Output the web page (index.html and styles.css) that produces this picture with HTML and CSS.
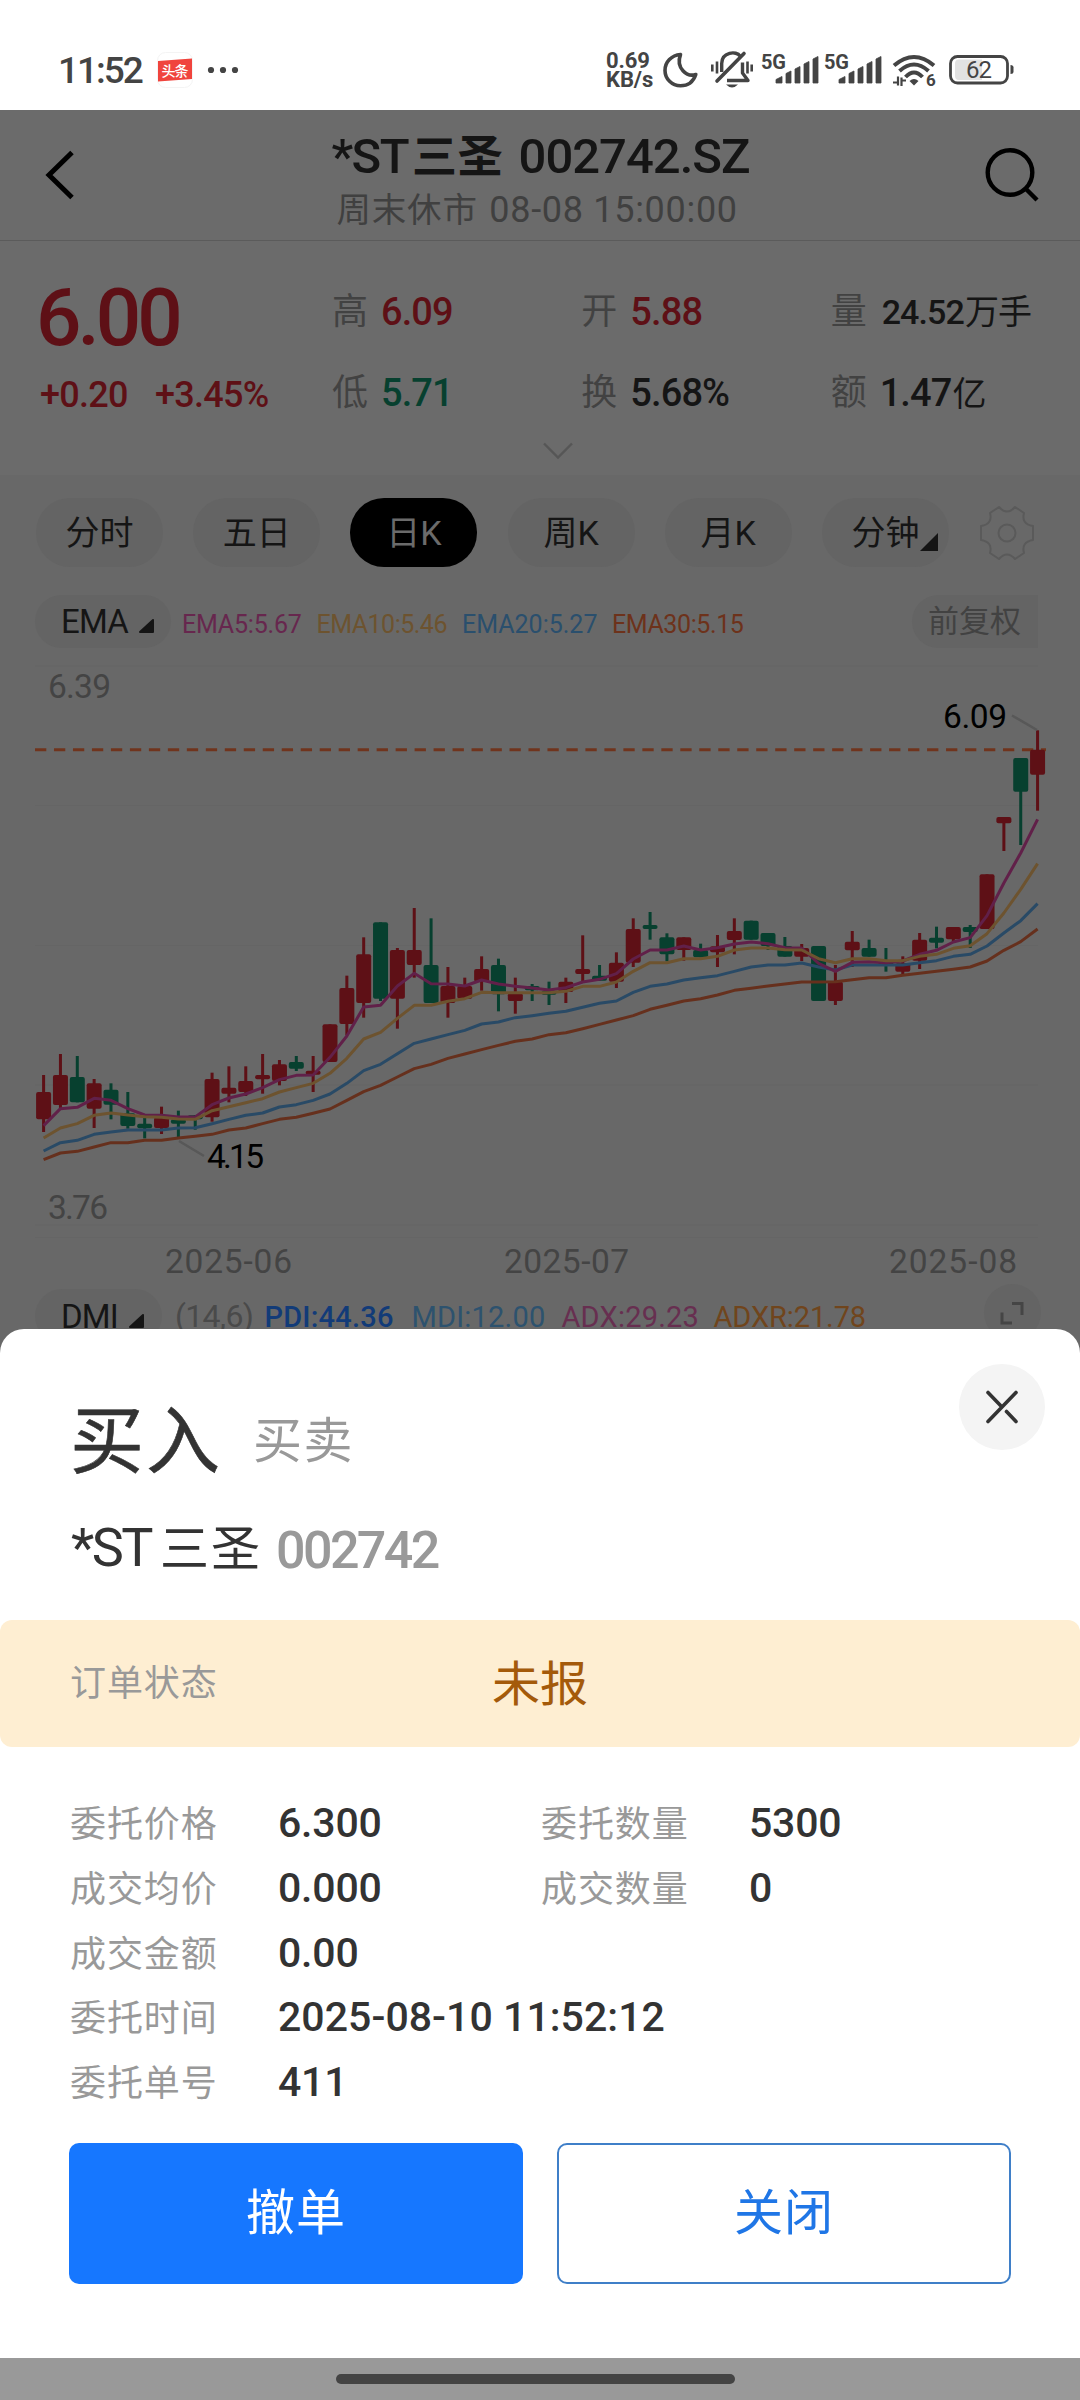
FILE: index.html
```html
<!DOCTYPE html>
<html lang="zh-CN">
<head>
<meta charset="utf-8">
<title>*ST三圣 002742.SZ</title>
<link rel="stylesheet" href="styles.css">
</head>
<body>
<div class="screen">
  <header class="statusbar">
    <span class="clock">11:52</span>
    <svg class="app-icon" width="36" height="36" viewBox="0 0 36 36"><rect x=".5" y=".5" width="35" height="35" rx="8" fill="#fff" stroke="#f4f4f4"/><path d="M1 9 35 6.500V27L1 29.500Z" fill="#f0443d"/><text x="4.500" y="23.500" font-size="14" fill="#fff" textLength="27" font-weight="500">头条</text></svg>
    <svg class="dots" width="32" height="8" viewBox="0 0 32 8" fill="#444"><circle cx="4" cy="4" r="3.100"/><circle cx="16" cy="4" r="3.100"/><circle cx="28" cy="4" r="3.100"/></svg>
    <span class="speed"><span>0.69</span><span>KB/s</span></span>
    <svg class="moon" width="36" height="36" viewBox="0 0 36 36"><path d="M17.500 2.500C8.500 3.200 2 10 2 18.500 2 27 9 33.800 17.500 33.800c7 0 12.800-4 15.300-11.300C24 25.500 12.500 16 17.500 2.500Z" fill="none" stroke="#444" stroke-width="3.600" stroke-linejoin="round"/></svg>
    <svg class="bell" width="42" height="38" viewBox="0 0 42 38" fill="none" stroke="#444" stroke-width="3.400"><path d="M10.700 21V12.500C10.700 1 25.500-.5 29 5M16 29.500H37L31.500 22V11.500" stroke-linejoin="round"/><path d="M6 30 33 2.500" stroke-width="3.600" stroke-linecap="round"/><path d="M1.300 13.500v7M6 10.500v12M36.500 10.500v12M40.700 13.500v7" stroke-width="2.600"/><path d="M15 33.500h12q-6 6-12 0Z" fill="#444" stroke="none"/></svg>
    <svg class="signal" width="58" height="36" viewBox="0 0 58 36" fill="#444"><text x="0" y="16.500" font-size="20" font-weight="700" textLength="25">5G</text><path d="M15 31v-3.500l6-3v6.500ZM25 21.500l5-2.500v12h-5ZM34 17l5-2.500v16.500h-5ZM43 12l5-2.500v21.500h-5ZM52 7l5-2.500v26.500h-5Z" stroke="#444" stroke-width=".8" stroke-linejoin="round"/></svg>
    <svg class="signal second" width="58" height="36" viewBox="0 0 58 36" fill="#444"><text x="0" y="16.500" font-size="20" font-weight="700" textLength="25">5G</text><path d="M15 31v-3.500l6-3v6.500ZM25 21.500l5-2.500v12h-5ZM34 17l5-2.500v16.500h-5ZM43 12l5-2.500v21.500h-5ZM52 7l5-2.500v26.500h-5Z" stroke="#444" stroke-width=".8" stroke-linejoin="round"/></svg>
    <svg class="wifi" width="46" height="36" viewBox="0 0 46 36"><g fill="none" stroke="#444" stroke-width="4"><path d="M2 13.500Q22 -3.500 42 13.500M7.500 19Q22 6 36.500 19M13.500 25Q22 16 30.500 25"/></g><path d="M17.500 29q4.500-4 9 0l-4.500 4.500Z" fill="#444"/><path d="M1 30.500H6V24.500V33.500M9.500 34V25.500V28.500H14" fill="none" stroke="#444" stroke-width="2.200"/><text x="34" y="34" font-size="17" font-weight="700" fill="#444">6</text></svg>
    <svg class="battery" width="67" height="32" viewBox="0 0 67 32"><rect x="1.500" y="2.500" width="57" height="26.500" rx="7" fill="none" stroke="#444" stroke-width="2.800"/><path d="M10 5.500h23V26H10q-4 0-4-4V9.500q0-4 4-4Z" fill="#e2e2e2"/><path d="M61.500 11q3 0 3 2.500v4q0 2.500-3 2.500Z" fill="#444"/><text x="17" y="24" font-size="24" fill="#444" textLength="26">62</text></svg>
  </header>

  <div class="navbar">
    <svg class="back" width="34" height="54" viewBox="0 0 34 54"><path d="M29 4.500 6 27 29 49.500" fill="none" stroke="#000" stroke-width="5"/></svg>
    <div class="heading">
      <div class="title">*ST<span class="han">三圣</span> <span class="ticker">002742.SZ</span></div>
      <div class="subtitle"><span class="han">周末休市</span> 08-08 15:00:00</div>
    </div>
    <svg class="search" width="56" height="60" viewBox="0 0 56 60"><g fill="none" stroke="#000" stroke-width="4.400"><circle cx="25" cy="26.500" r="22.300"/><path d="M40 42 52 54"/></g></svg>
  </div>

  <section class="quote">
    <div class="last">
      <div class="price">6.00</div>
      <div class="change"><span>+0.20</span><span>+3.45%</span></div>
    </div>
    <div class="stat"><p><i>高</i><b class="up">6.09</b></p><p><i>低</i><b class="down">5.71</b></p></div>
    <div class="stat"><p><i>开</i><b class="up">5.88</b></p><p><i>换</i><b>5.68%</b></p></div>
    <div class="stat"><p><i>量</i><b class="small">24.52<span>万手</span></b></p><p><i>额</i><b>1.47<span>亿</span></b></p></div>
    <svg class="expand" width="32" height="18" viewBox="0 0 32 18"><path d="M2 1.500 16 15.500 30 1.500" fill="none" stroke="#565656" stroke-width="2.400"/></svg>
  </section>

  <section class="market">
    <nav class="tabs">
      <span>分时</span><span>五日</span><span class="active">日K</span><span>周K</span><span>月K</span><span>分钟<svg class="corner" width="18" height="18" viewBox="0 0 18 18"><path d="M18 0V18H0Z" fill="#151515"/></svg></span>
      <svg class="gear" width="56" height="56" viewBox="-28 -28 56 56" fill="none" stroke="#5a5a5a" stroke-width="2"><path d="M-8-26Q0-17 8-26L17-20Q14-9 26-7V7Q14 9 17 20L8 26Q0 17-8 26L-17 20Q-14 9-26 7V-7Q-14-9-17-20Z" stroke-linejoin="round"/><circle r="8.500"/></svg>
    </nav>
    <div class="legend">
      <span class="pick">EMA<svg width="16" height="16" viewBox="0 0 16 16"><path d="M15 2V14H2Z" fill="#151515" stroke="#151515" stroke-width="2" stroke-linejoin="round"/></svg></span>
      <span class="e5">EMA5:5.67</span><span class="e10">EMA10:5.46</span><span class="e20">EMA20:5.27</span><span class="e30">EMA30:5.15</span>
      <span class="adjust">前复权</span>
    </div>
    <svg class="chart" width="1080" height="635" viewBox="0 648 1080 635">
      <g class="grid"><path d="M35 666H1038M35 805.500H1038M35 945.500H1038M35 1085H1038M35 1225H1038M35 1237.500H1038"/></g>
      <path class="lastline" d="M35 749.700H1046"/>
      <g id="candles"></g>
      <g id="averages"></g>
      <path class="leader" d="M1012 715.500 1037 730M179 1141 204 1156"/>
      <g class="mark"><text x="943" y="728" textLength="64">6.09</text><text x="207" y="1168" textLength="57">4.15</text></g>
      <g class="axis"><text x="48" y="697.500" textLength="63">6.39</text><text x="48" y="1218.500" textLength="60">3.76</text><text x="165" y="1273" textLength="127">2025-06</text><text x="504" y="1273" textLength="125">2025-07</text><text x="889" y="1273" textLength="128">2025-08</text></g>
    </svg>
    <div class="indicator">
      <span class="pick">DMI<svg width="16" height="16" viewBox="0 0 16 16"><path d="M15 2V14H2Z" fill="#151515" stroke="#151515" stroke-width="2" stroke-linejoin="round"/></svg></span>
      <span class="args">(14,6)</span><span class="pdi">PDI:44.36</span><span class="mdi">MDI:12.00</span><span class="adx">ADX:29.23</span><span class="adxr">ADXR:21.78</span>
      <span class="zoom"><svg width="28" height="28" viewBox="0 0 28 28"><path d="M14 4.500H24V16M4 13.500V24H14" fill="none" stroke="#454545" stroke-width="3"/></svg></span>
    </div>
  </section>

  <section class="sheet">
    <button class="close" aria-label="关闭"><svg width="36" height="36" viewBox="0 0 36 36"><path d="M4 3.500 17 17M22.500 22.500 32 32.500M32 3.500 4 32.500" fill="none" stroke="#333" stroke-width="3.600" stroke-linecap="round"/></svg></button>
    <div class="side"><strong>买入</strong><span>买卖</span></div>
    <div class="stock"><span class="name">*ST</span><span class="cn">三圣</span><span class="code">002742</span></div>
    <div class="state"><span class="label">订单状态</span><span class="value">未报</span></div>
    <div class="details">
      <span class="label">委托价格</span><span>6.300</span><span class="label">委托数量</span><span>5300</span>
      <span class="label">成交均价</span><span>0.000</span><span class="label">成交数量</span><span>0</span>
      <span class="label">成交金额</span><span class="wide">0.00</span>
      <span class="label">委托时间</span><span class="wide time">2025-08-10 11:52:12</span>
      <span class="label">委托单号</span><span class="wide">411</span>
    </div>
    <div class="actions"><button class="primary">撤单</button><button class="outline">关闭</button></div>
  </section>
  <footer class="home"><span></span></footer>
</div>
<script src="chart.js"></script>
</body>
</html>
```

FILE: styles.css
```css
* { box-sizing: border-box; }
body, p { margin: 0; }
body { background: #fff; font-family: Roboto, "Noto Sans CJK SC", sans-serif; color: #151515; }
svg { display: block; flex: none; overflow: visible; }
i, b { font-style: normal; }
button { font-family: inherit; padding: 0; }
.screen { position: relative; width: 1080px; height: 2400px; overflow: hidden; background: #686868; white-space: nowrap; }

/* status bar */
.statusbar { height: 110px; padding: 30px 0 0 57px; display: flex; align-items: center; background: #fff; color: #444; }
.clock { font-size: 37px; font-weight: 500; width: 100px; letter-spacing: -2px; padding-left: 1px; }
.dots { margin-left: 14px; }
.speed { display: flex; flex-direction: column; width: 50px; margin-left: 367px; font-size: 22px; font-weight: 700; line-height: 19px; letter-spacing: -.1px; }
.moon { margin-left: 7px; }
.bell { margin-left: 12px; }
.signal { margin-left: 8px; }
.signal.second { margin-left: 5px; }
.wifi { margin-left: 10px; }
.battery { margin-left: 11px; }

/* title bar */
.navbar { height: 131px; display: flex; justify-content: space-between; padding: 0 39px 0 43px; background: #6b6b6b; border-bottom: 1px solid #5b5b5b; }
.back { margin-top: 38px; }
.search { margin-top: 36px; }
.heading { width: 420px; margin-left: 11px; padding-top: 21px; }
.title { font-size: 49px; font-weight: 500; line-height: 51px; height: 51px; letter-spacing: -1.600px; padding-left: 5px; }
.title .han { font-size: 45px; letter-spacing: .5px; font-weight: 700; padding: 0 5px 0 4px; }
.title .ticker { letter-spacing: -1px; }
.subtitle { color: #404040; font-size: 36px; line-height: 57px; padding-left: 10px; letter-spacing: .7px; }
.subtitle .han { font-size: 34.500px; letter-spacing: .8px; padding-right: 2px; }

/* quote */
.quote { position: relative; height: 234px; background: #6b6b6b; padding-left: 37px; display: flex; }
.last { width: 297px; color: #5e1016; font-weight: 500; }
.price { margin-top: 37px; font-size: 80px; line-height: 80px; letter-spacing: -4px; margin-left: -1px; }
.change { display: flex; gap: 27px; margin-top: 17px; font-size: 36px; line-height: 40px; padding-left: 3px; letter-spacing: -.7px; }
.stat { width: 251px; padding-top: 46px; }
.stat p { display: flex; height: 80.500px; line-height: 50px; }
.stat i { width: 49px; font-size: 36px; color: #424242; }
.stat b { font-size: 38px; font-weight: 500; letter-spacing: -.9px; }
.stat b.small { font-size: 34px; padding-left: 2px; }
.stat b span { font-size: 34px; font-weight: 400; padding-left: 1px; }
.stat .up { color: #5e1016; }
.stat .down { color: #07402f; }
.expand { position: absolute; left: 542px; top: 201px; }

/* period tabs */
.market { background: #686868; height: 1000px; }
.tabs { display: flex; gap: 30.200px; padding: 23px 0 0 36px; height: 120px; }
.tabs > span { position: relative; flex: none; width: 127px; height: 69px; line-height: 71px; border-radius: 34px; background: #646464; text-align: center; font-size: 34px; }
.tabs .active { background: #000; color: #6b6b6b; }
.corner { position: absolute; right: 11px; bottom: 16px; }
.gear { margin: 6.500px 0 0 0; }

/* overlay indicators */
.legend { display: flex; height: 53px; line-height: 60px; padding-left: 35px; font-size: 25px; }
.legend > span { flex: none; }
.pick { display: flex; align-items: center; width: 136px; height: 53px; line-height: 53px; border-radius: 27px; background: #646464; padding-left: 26px; font-size: 33px; margin-right: 11px; letter-spacing: -.8px; }
.pick svg { margin: 9px 0 0 10px; }
.legend .e5 { width: 134.500px; color: #67274e; letter-spacing: -.2px; }
.legend .e10 { width: 145.500px; color: #6d532f; letter-spacing: -.5px; }
.legend .e20 { width: 150px; color: #2a4f6d; }
.legend .e30 { width: 300px; color: #6d321b; letter-spacing: -.4px; }
.adjust { width: 126px; border-radius: 27px 0 0 27px; background: #646464; color: #424242; font-size: 31px; line-height: 54px; padding-left: 16px; }

/* candlestick chart */
.chart { font-size: 33.500px; }
.grid path { fill: none; stroke: #656565; }
.lastline { stroke: #70341d; stroke-width: 3; stroke-dasharray: 11.300 7.680; }
.up-bar { fill: #5e1016; }
.down-bar { fill: #07402f; }
.avg { fill: none; stroke-width: 3; stroke-linejoin: round; }
.avg5 { stroke: #612049; }
.avg10 { stroke: #6d532f; }
.avg20 { stroke: #294a66; }
.avg30 { stroke: #66301d; }
.leader { stroke: #585858; stroke-width: 2.500; }
.mark { fill: #000; }
.axis { fill: #444; }

/* lower indicator row */
.indicator { display: flex; padding: 6px 0 0 35px; font-size: 29px; line-height: 56px; }
.indicator > span { flex: none; }
.indicator .pick { width: 127px; margin-right: 13px; height: 54px; }
.args { width: 89.500px; color: #4a4a4a; font-size: 32px; line-height: 54px; letter-spacing: -.7px; }
.pdi { width: 147px; color: #123b78; font-weight: 500; letter-spacing: .2px; }
.mdi { width: 150px; color: #2d526e; letter-spacing: .2px; }
.adx { width: 152px; color: #672f50; letter-spacing: .2px; }
.adxr { width: 270px; color: #70451c; letter-spacing: -.1px; }
.zoom { width: 57px; height: 57px; margin-top: -5px; border-radius: 50%; background: #646464; display: flex; align-items: center; justify-content: center; }

/* order sheet */
.sheet { position: absolute; left: 0; top: 1329px; width: 1080px; height: 1029px; background: #fff; border-radius: 24px 24px 0 0; color: #333; }
.close { position: absolute; left: 959px; top: 35px; width: 86px; height: 86px; border: 0; border-radius: 50%; background: #f4f4f4; display: flex; align-items: center; justify-content: center; }
.side { display: flex; padding: 63px 0 0 70px; line-height: 100px; height: 165px; font-size: 49px; color: #999; letter-spacing: 1.500px; }
.side strong { font-size: 74px; font-weight: 400; color: #333; width: 183px; letter-spacing: 2px; -webkit-text-stroke: .6px; }
.stock { display: flex; height: 126px; padding: 15px 0 0 71px; line-height: 80px; font-size: 49px; }
.stock .name { width: 89px; font-size: 54px; letter-spacing: -2.500px; line-height: 78px; }
.stock .cn { width: 116px; letter-spacing: 2px; line-height: 82px; }
.stock .code { font-size: 52px; line-height: 84px; font-weight: 500; color: #999; letter-spacing: -2.600px; }
.state { display: flex; align-items: center; height: 127px; border-radius: 12px; background: #feeed2; padding: 0 0 7px 70px; }
.label { font-size: 36px; letter-spacing: .9px; color: #999; font-weight: 400; }
.state .value { width: 420px; margin-left: auto; margin-right: 168px; font-size: 48px; color: #a45a0a; }
.details { display: grid; grid-template-columns: 208px 263px 208px 1fr; grid-auto-rows: 64.800px; line-height: 64.800px; padding: 44px 0 0 70px; height: 396px; font-size: 41px; font-weight: 500; letter-spacing: -.2px; }
.details .label { padding-top: 2px; }
.details .wide { grid-column: span 3; }
.details .time { letter-spacing: .05px; }
.actions { display: flex; gap: 34px; padding-left: 69px; }
.actions button { width: 454px; height: 141px; border-radius: 10px; font-size: 49px; line-height: 138px; letter-spacing: 1px; }
.primary { border: 0; background: #1677ff; color: #fff; }
.outline { border: 2px solid #3f7fc8; background: #fff; color: #1f76e6; }

/* gesture bar */
.home { position: absolute; left: 0; bottom: 0; width: 1080px; height: 42px; background: #999; padding: 16px 0 0 336px; }
.home span { display: block; width: 399px; height: 10px; border-radius: 5px; background: #444; }
```

FILE: chart.js
```js
// Vertical values are thirds of a pixel below each segment's base line.
const STEP = 16.847, FIRST = 43.6;
const at = (base, rows) => rows.map(r => Array.isArray(r)
  ? r.map((v, i) => i < 4 ? base + v / 3 : v) : base + r / 3);

// high, body top, body bottom, low, 1 = rise / 0 = fall
const candles = [
  ...at(880, [[585,636,718,756,1],[522,585,675,685,1],[528,591,667,667,0],[597,610,686,744,1],[610,629,674,718,0],
    [636,700,738,746,0],[705,731,745,775,0],[680,712,744,762,1],[692,718,731,772,0],[705,706,718,749,0],
    [578,597,712,725,1],[559,623,641,667,1],[559,603,636,648,1],[522,585,598,641,1],[540,553,603,616,1],
    [528,546,566,573,0],[528,572,584,636,1],[433,433,546,546,1],[287,324,432,465,1]]),
  ...at(860, [[232,283,429,473,1],[187,187,416,423,0],[264,270,416,506,1],[144,270,315,353,1],[175,315,429,429,0],
    [321,378,429,473,1],[353,378,416,416,1],[289,327,365,392,1],[296,315,403,454,0],[353,400,423,461,1],
    [372,378,391,423,0],[365,392,404,435,0],[353,365,396,429,1],[226,327,342,365,1],[315,347,362,362,0],
    [277,308,365,384,1],[175,207,308,321,1],[156,195,207,239,0],[220,232,283,304,0],[232,232,270,302,1],
    [251,270,292,292,0]]),
  ...at(680, [[765,799,817,861,1],[715,753,780,823,1],[722,722,779,779,0],[759,759,798,810,0],[771,798,830,830,0],
    [792,804,830,843,1],[798,798,963,963,0],[855,905,963,975,1],[753,785,811,861,1],[779,804,830,830,0],
    [804,842,854,875,0],[829,850,875,882,1],[759,779,842,867,1],[740,773,788,805,0],[741,741,778,785,1],
    [735,741,756,804,0],[583,583,747,747,1],[411,411,430,513,1],[234,234,335,495,0],[151,209,284,392,1]])
];

const averages = {
  avg30: [...at(880, [839,819,814,801,788,788,781,781,774,769,763,750,744,731,718,712,700,687,661]),
    ...at(860, [695,676,651,626,613,595,582,569,556,544,537,524,518,506,493,480,467,448,436,423,416]),
    ...at(680, [945,931,925,918,912,906,906,905,899,893,893,886,880,874,868,861,843,811,785,747])],
  avg20: [...at(880, [813,788,781,763,756,750,750,750,744,743,731,718,706,699,681,674,661,642,610]),
    ...at(860, [632,613,581,550,537,524,511,492,486,473,467,460,454,442,430,423,397,379,372,360,353]),
    ...at(680, [887,874,861,855,855,849,861,870,855,855,855,855,848,842,829,823,798,759,722,671])],
  avg5: [...at(880, [737,686,682,655,661,686,705,706,711,711,674,654,642,623,599,586,585,532,468]),
    ...at(860, [441,436,378,340,371,372,378,360,372,379,384,390,383,366,358,341,297,270,270,258,270]),
    ...at(680, [803,792,786,791,803,804,850,874,847,845,848,843,823,811,786,773,707,609,519,418])],
  avg10: [...at(880, [774,744,731,706,699,705,710,712,717,718,692,680,668,656,636,623,610,580,535]),
    ...at(860, [537,517,475,436,436,424,416,397,398,398,398,398,394,379,379,366,334,308,308,296,296]),
    ...at(680, [829,810,804,804,809,810,836,848,836,836,842,842,829,823,805,797,761,699,628,551])]
};

document.getElementById('candles').innerHTML = candles.map(([hi, top, bottom, lo, rise], i) => {
  const x = FIRST + i * STEP;
  const cls = rise ? 'up-bar' : 'down-bar';
  return `<rect class="${cls}" x="${x - 1.5}" y="${hi}" width="3" height="${lo - hi}"/>` +
    `<rect class="${cls}" x="${x - 7.5}" y="${top}" width="15" height="${bottom - top}" rx="2"/>`;
}).join('');

document.getElementById('averages').innerHTML = Object.entries(averages).map(([name, ys]) =>
  `<polyline class="avg ${name}" points="${ys.map((y, i) => `${FIRST + i * STEP},${y}`).join(' ')}"/>`).join('');
```
